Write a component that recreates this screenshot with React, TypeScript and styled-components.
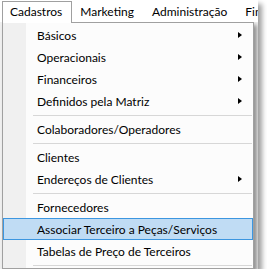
import React from "react";
import styled, { createGlobalStyle } from "styled-components";

const Global = createGlobalStyle`
  html, body { margin: 0; padding: 0; background: #ffffff; }
  body { font-family: Lato, "Noto Sans", sans-serif; font-size: 12px; color: #000; }
`;

const Frame = styled.div`
  width: 258px;
  display: flex;
  flex-direction: column;
  overflow: hidden;
  background: #f0f0f0;
  box-shadow: 4px 4px 5px rgba(0, 0, 0, 0.38);
`;

const MenuBar = styled.div`
  display: flex;
  align-items: flex-end;
  height: 22px;
  padding-left: 2px;
  background: #ffffff;
  white-space: nowrap;
`;

const BarItem = styled.div<{ $open?: boolean }>`
  position: relative;
  z-index: 2;
  line-height: 19px;
  padding: 0 9px 0 7px;
  margin-bottom: ${(p) => (p.$open ? "-1px" : "0")};
  height: ${(p) => (p.$open ? "21px" : "20px")};
  border: 1px solid ${(p) => (p.$open ? "#a0a0a0" : "transparent")};
  border-bottom: none;
  background: #ffffff;
  flex-shrink: 0;
`;

const Dropdown = styled.div`
  position: relative;
  z-index: 1;
  width: 250px;
  margin-left: 2px;
  border: 1px solid #a0a0a0;
  padding-top: 1px;
  background: linear-gradient(to right, #f0f0f0 0, #f0f0f0 23px, #fcfcfc 23px);
  box-shadow: 3px 3px 4px rgba(0, 0, 0, 0.4);
`;

const Item = styled.div<{ $active?: boolean }>`
  display: flex;
  align-items: center;
  justify-content: space-between;
  height: 22px;
  box-sizing: border-box;
  padding: 0 10px 0 33px;
  border: 1px solid ${(p) => (p.$active ? "#3c96e0" : "transparent")};
  background: ${(p) => (p.$active ? "#c0dcf4" : "transparent")};
  white-space: nowrap;
`;

const Arrow = styled.span`
  width: 0;
  height: 0;
  border-top: 3.5px solid transparent;
  border-bottom: 3.5px solid transparent;
  border-left: 4px solid #000;
`;

const Separator = styled.div`
  height: 6px;
  display: flex;
  align-items: center;
  padding-left: 30px;
  padding-right: 1px;
  &::after {
    content: "";
    flex: 1;
    height: 1px;
    background: #d7d7d7;
  }
`;

type Entry = { label?: string; sub?: boolean; active?: boolean; sep?: boolean };

const entries: Entry[] = [
  { label: "Básicos", sub: true },
  { label: "Operacionais", sub: true },
  { label: "Financeiros", sub: true },
  { label: "Definidos pela Matriz", sub: true },
  { sep: true },
  { label: "Colaboradores/Operadores" },
  { sep: true },
  { label: "Clientes" },
  { label: "Endereços de Clientes", sub: true },
  { sep: true },
  { label: "Fornecedores" },
  { label: "Associar Terceiro a Peças/Serviços", active: true },
  { label: "Tabelas de Preço de Terceiros" },
  { sep: true },
];

export default function App() {
  return (
    <>
      <Global />
      <Frame>
        <MenuBar>
          <BarItem $open>Cadastros</BarItem>
          <BarItem>Marketing</BarItem>
          <BarItem>Administração</BarItem>
          <BarItem>Financeiro</BarItem>
        </MenuBar>
        <Dropdown>
          {entries.map((e, i) =>
            e.sep ? (
              <Separator key={i} />
            ) : (
              <Item key={i} $active={e.active}>
                <span>{e.label}</span>
                {e.sub && <Arrow />}
              </Item>
            )
          )}
        </Dropdown>
      </Frame>
    </>
  );
}
